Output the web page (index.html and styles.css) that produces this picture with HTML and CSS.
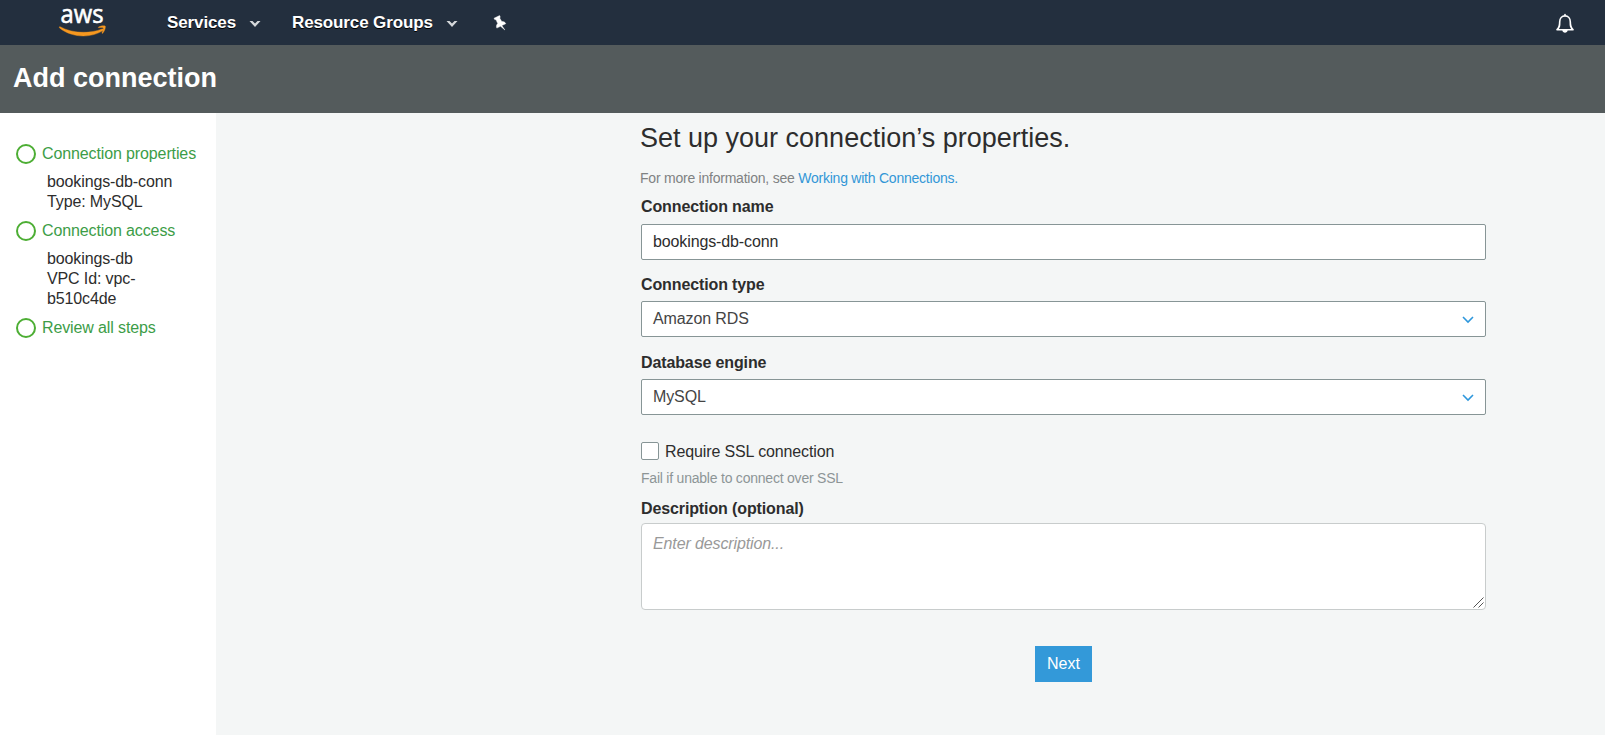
FILE: index.html
```html
<!DOCTYPE html>
<html lang="en">
<head>
<meta charset="utf-8">
<title>Add connection</title>
<link rel="stylesheet" href="styles.css">
</head>
<body>
<header class="nav">
  <svg class="logo" width="48" height="40" viewBox="0 0 48 40" role="img" aria-label="aws">
    <text class="logo-text" x="1.500" y="22.800" textLength="43" lengthAdjust="spacingAndGlyphs">aws</text>
    <path d="M1 26.700C13 33.500 31 34 43 29C44.200 28.500 45 29.700 44 30.500C32 38.300 13 38 .6 28C0 27.200.4 26.400 1 26.700Z" fill="#f7981f" stroke="#f7981f" stroke-width=".4"/>
    <path d="M39.500 27.100C42 25.500 46 25.700 46.300 26.300C46.700 27.300 45.600 31.500 43.600 33.200C43.100 33.600 42.800 33.300 43 32.800C43.800 30.900 44.800 28.500 44.200 27.900C43.600 27.200 41.500 27.500 39.800 27.700C39.200 27.700 39.100 27.400 39.500 27.100Z" fill="#f7981f" stroke="#f7981f" stroke-width=".4"/>
  </svg>
  <a class="nav-item services">Services<svg class="caret" width="12" height="8" viewBox="0 0 12 8"><path d="M.5 1H3.500L6 3.500L8.500 1H11.500L6 7Z"/></svg></a>
  <a class="nav-item groups">Resource Groups<svg class="caret" width="12" height="8" viewBox="0 0 12 8"><path d="M.5 1H3.500L6 3.500L8.500 1H11.500L6 7Z"/></svg></a>
  <svg class="pin" width="14" height="16" viewBox="0 0 14 16"><path d="M1 3.200L6.600.5L7.300 2L6.700 3L8.800 6.600C10.500 6.200 12 7 12.800 8.700L8.900 10.600L11.900 15L7.500 11.300L3.800 13.100C3 11.300 3.500 9.700 4.700 8.600L3 4.700L1.700 4.600Z" fill="#fff" stroke="#fff" stroke-width=".4"/></svg>
  <svg class="bell" width="20" height="22" viewBox="0 0 20 22"><path d="M10 2.500V4M2 17.700C4.700 15.600 4.700 13.500 4.700 9.800C4.700 6.200 7 3.900 10 3.900S15.300 6.200 15.300 9.800C15.300 13.500 15.300 15.600 18 17.700Z" fill="none" stroke="#fff" stroke-width="1.600" stroke-linecap="round" stroke-linejoin="round"/><path d="M7.300 18H12.700C12.500 21.500 7.500 21.500 7.300 18Z" fill="#fff"/></svg>
</header>
<div class="titlebar"><h1>Add connection</h1></div>
<div class="body">
  <aside class="steps">
    <div class="step"><span class="dot"></span>Connection properties</div>
    <div class="detail">bookings-db-conn<br>Type: MySQL</div>
    <div class="step"><span class="dot"></span>Connection access</div>
    <div class="detail">bookings-db<br>VPC Id: vpc-<br>b510c4de</div>
    <div class="step"><span class="dot"></span>Review all steps</div>
  </aside>
  <main class="main">
    <form class="form">
      <h2>Set up your connection’s properties.</h2>
      <p class="info">For more information, see <a>Working with Connections.</a></p>
      <label class="label name-label">Connection name</label>
      <div class="field">bookings-db-conn</div>
      <label class="label type-label">Connection type</label>
      <div class="field select">Amazon RDS<svg width="12" height="8" viewBox="0 0 12 8"><path d="M1 1L6 6L11 1"/></svg></div>
      <label class="label engine-label">Database engine</label>
      <div class="field select">MySQL<svg width="12" height="8" viewBox="0 0 12 8"><path d="M1 1L6 6L11 1"/></svg></div>
      <div class="check"><span class="box"></span>Require SSL connection</div>
      <p class="hint">Fail if unable to connect over SSL</p>
      <label class="label desc-label">Description (optional)</label>
      <div class="desc-wrap">
        <textarea class="desc" placeholder="Enter description..."></textarea>
        <svg class="grip" width="11" height="11" viewBox="0 0 11 11"><path d="M.5 10.500L10.500.5M5.500 10.500L10.500 5.500"/></svg>
      </div>
      <button class="next" type="button">Next</button>
    </form>
  </main>
</div>
</body>
</html>
```

FILE: styles.css
```css
* { box-sizing: border-box; }
body {
  margin: 0;
  height: 735px;
  overflow: hidden;
  display: flex;
  flex-direction: column;
  font: 16px/20px "Liberation Sans", Arial, sans-serif;
  letter-spacing: -0.12px;
  color: #2d2d2d;
}
h1, h2, p { margin: 0; }
.nav {
  flex: none;
  height: 45px;
  display: flex;
  align-items: flex-start;
  background: #232f3e;
}
.logo { margin: 0 0 0 59px; overflow: visible; }
.logo-text { font: 400 26px/1 "Open Sans", sans-serif; letter-spacing: 0; fill: #fff; stroke: #fff; stroke-width: 0.6; }
.nav-item {
  display: flex;
  align-items: center;
  margin-top: 13px;
  font-size: 17px;
  font-weight: bold;
  color: #fff;
  text-shadow: 0 1px 0 #000;
}
.services { margin-left: 60px; }
.groups { margin-left: 31px; }
.caret { margin: 2px 0 0 13px; fill: #d5d8db; }
.pin { margin: 15px 0 0 35px; }
.bell { margin: 12px 30px 0 auto; }
.titlebar { flex: none; height: 68px; padding: 17px 13px; background: #545b5c; }
.titlebar h1 { font-size: 27px; line-height: 32px; letter-spacing: 0; color: #fff; }
.body { flex: 1; display: flex; }
.steps { width: 216px; padding: 31px 16px; background: #fff; }
.step { display: flex; align-items: center; gap: 6px; height: 20px; color: #3c9d47; white-space: nowrap; }
.dot { width: 20px; height: 20px; margin-bottom: 1px; border: 2px solid #4dae34; border-radius: 50%; }
.detail { margin: 8px 0 9px 31px; }
.main { flex: 1; background: #f4f6f6; }
.form { display: flex; flex-direction: column; width: 845px; margin-left: 425px; }
h2 { margin: 9px 0 0 -1px; font-size: 27px; line-height: 32px; font-weight: normal; letter-spacing: 0; }
.info { margin: 14px 0 0 -1px; font-size: 14px; letter-spacing: -0.23px; color: #7f8283; }
.info a { color: #3296d7; }
.label { font-weight: bold; }
.name-label { margin: 9px 0 7px; }
.type-label { margin: 15px 0 6px; }
.engine-label { margin: 16px 0 6px; }
.field {
  height: 36px;
  padding: 0 11px;
  display: flex;
  align-items: center;
  background: #fff;
  border: 1px solid #879596;
  border-radius: 2px;
}
.select { justify-content: space-between; color: #444; }
.select svg { margin-top: 2px; fill: none; stroke: #2e97dc; stroke-width: 1.600; }
.check { display: flex; align-items: center; gap: 6px; height: 20px; margin-top: 27px; }
.box { width: 18px; height: 18px; margin-bottom: 2px; background: #fff; border: 1px solid #879596; border-radius: 2px; }
.hint { margin-top: 6px; font-size: 14px; letter-spacing: -0.22px; color: #8d9596; }
.desc-label { margin: 11px 0 4px; }
.desc-wrap { position: relative; display: flex; height: 87px; }
.desc {
  flex: 1;
  padding: 10px 11px;
  border: 1px solid #c8cccc;
  border-radius: 4px;
  font: inherit;
  letter-spacing: inherit;
  background: #fff;
  resize: none;
}
.desc::placeholder { color: #999; font-style: italic; }
.grip { position: absolute; right: 2px; bottom: 2px; fill: none; stroke: #555; stroke-width: 1; }
.next {
  width: 57px;
  height: 36px;
  margin: 36px 0 0 394px;
  padding: 0;
  border: 0;
  background: #3399d9;
  color: #fff;
  font: inherit;
}
```
